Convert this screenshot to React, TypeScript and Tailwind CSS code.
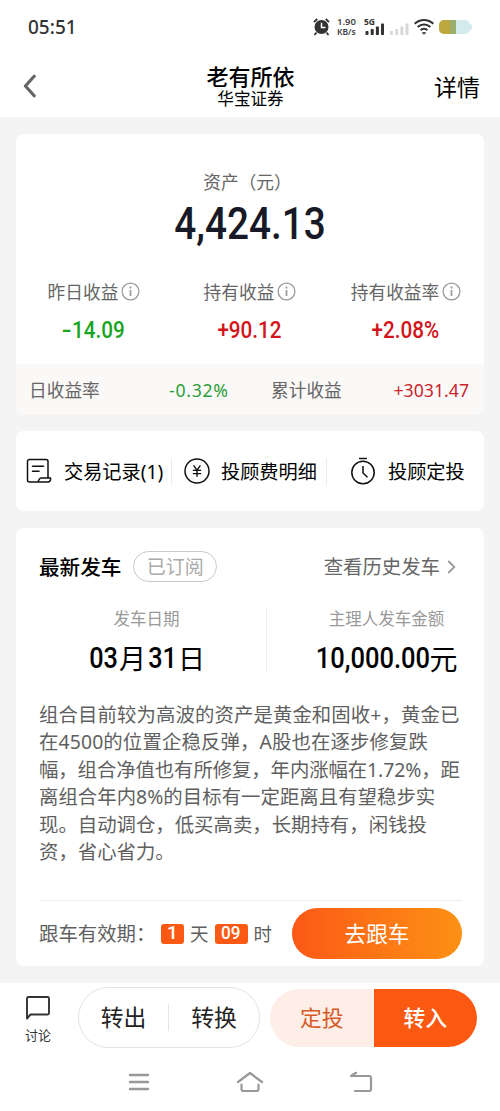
import React from "react";

const cjk = "font-['Noto_Sans','Noto_Sans_CJK_SC',sans-serif]";

function Info() {
  return (
    <svg className="ml-[3px] h-[19px] w-[19px] shrink-0" viewBox="0 0 19 19" fill="none" stroke="#999">
      <circle cx="9.5" cy="9.5" r="8.4" strokeWidth="1.3" />
      <path d="M9.5 8v6" strokeWidth="1.7" />
      <path d="M9.5 4.6v1.9" strokeWidth="1.8" />
    </svg>
  );
}

function Stat({ label, value, sign, color }: { label: string; value: string; sign: string; color: string }) {
  return (
    <div className="flex flex-1 flex-col items-center">
      <div className="flex h-[26px] items-center text-[17.7px] text-[#666]">
        <span className="pt-[2px]">{label}</span>
        <Info />
      </div>
      <div className={`mt-[11px] flex h-[30px] items-center pt-[2px] pr-[1px] font-['Roboto',sans-serif] text-[23.5px] font-medium ${color}`}>
        <span className="scale-x-[.88]">
          {sign === "-" ? <span className="mr-[2px] inline-block scale-x-[1.400]">-</span> : sign}
          {value}
        </span>
      </div>
    </div>
  );
}

function StatusBar() {
  return (
    <div className="flex h-[54px] shrink-0 items-center pl-[28px] pr-[28px]">
      <span className="text-[19px] font-medium leading-[54px] text-[#333]">05:51</span>
      <svg className="ml-auto h-[18px] w-[17px]" viewBox="0 0 17 18" fill="none">
        <circle cx="8.5" cy="9" r="7" fill="#333" />
        <path d="M8.5 4.8v4.7h4" stroke="#fff" strokeWidth="1.5" />
        <path d="M1 4.2 4.2 1M16 4.2 12.8 1M3.5 14.5 1.5 17M13.5 14.5l2 2.5" stroke="#333" strokeWidth="1.8" />
      </svg>
      <div className="ml-[7px] flex w-[21px] flex-col text-[9.5px] font-semibold leading-[10px] text-[#444]">
        <span className="whitespace-nowrap">1.90</span>
        <span className="whitespace-nowrap text-[8.5px]">KB/s</span>
      </div>
      <svg className="ml-[6px] h-[20px] w-[21px]" viewBox="0 0 21 20" fill="#333">
        <text x="0" y="7.5" fontSize="8.5" fontWeight="700" fontFamily="Noto Sans">5G</text>
        <rect x="1.5" y="14" width="3" height="4" rx=".7" />
        <rect x="6.7" y="12" width="3" height="6" rx=".7" />
        <rect x="11.9" y="9.5" width="3" height="8.5" rx=".7" />
        <rect x="17" y="6.5" width="3" height="11.5" rx=".7" />
      </svg>
      <svg className="ml-[4px] h-[20px] w-[21px]" viewBox="0 0 21 20" fill="#d8d8d8">
        <rect x="1" y="14" width="3" height="4" rx=".7" />
        <rect x="6.2" y="12" width="3" height="6" rx=".7" />
        <rect x="11.4" y="9.5" width="3" height="8.5" rx=".7" />
        <rect x="16.5" y="6.5" width="3" height="11.5" rx=".7" />
      </svg>
      <svg className="ml-[4px] h-[18px] w-[20px]" viewBox="0 0 20 18" fill="none" stroke="#333" strokeWidth="2">
        <path d="M.7 5.7a13.3 13.3 0 0 1 18.6 0M3.7 9a9 9 0 0 1 12.6 0M6.6 12.2a5 5 0 0 1 6.8 0" />
        <path d="M7.6 14.2h4.8L10 16.8z" fill="#333" stroke="none" />
      </svg>
      <div className="ml-[5px] flex h-[14px] w-[31px] overflow-hidden rounded-[5px] bg-[#d3ebec]">
        <div className="w-[11px] bg-[#bfa73f]" />
        <div className="w-[6px] bg-[#9aaf6c]" />
      </div>
      <div className="h-[6px] w-[2px] rounded-r-full bg-[#d3ebec]" />
    </div>
  );
}

const lines = [
  { text: "组合目前较为高波的资产是黄金和固收+，黄金已", spacing: "tracking-[.1px]" },
  { text: "在4500的位置企稳反弹，A股也在逐步修复跌", spacing: "tracking-[.12px]" },
  { text: "幅，组合净值也有所修复，年内涨幅在1.72%，距", spacing: "tracking-[-.09px]" },
  { text: "离组合年内8%的目标有一定距离且有望稳步实", spacing: "tracking-[.03px]" },
  { text: "现。自动调仓，低买高卖，长期持有，闲钱投", spacing: "tracking-normal" },
  { text: "资，省心省力。", spacing: "tracking-normal" },
];

export default function App() {
  return (
    <div className={`flex h-[1111px] w-[500px] flex-col overflow-hidden whitespace-nowrap bg-[#f4f4f4] text-black ${cjk}`}>
      <header className="h-[117px] shrink-0 bg-white">
        <StatusBar />
        <div className="grid h-[63px] grid-cols-3 items-center pl-[23px] pr-[20px]">
          <svg className="h-[24px] w-[14px]" viewBox="0 0 14 24" fill="none" stroke="#666" strokeWidth="3.2" strokeLinecap="round" strokeLinejoin="round">
            <path d="M11.2 2.2 2.4 12l8.8 9.8" />
          </svg>
          <div className="flex flex-col items-center pr-[2px] pt-[4px] font-['Liberation_Sans','Noto_Sans_CJK_SC',sans-serif]">
            <span className="text-[22px] font-medium leading-[25px]">老有所依</span>
            <span className="text-[16.6px] leading-[20px]">华宝证券</span>
          </div>
          <span className="pt-[2px] text-right text-[23px] leading-[30px]">详情</span>
        </div>
      </header>

      <section className="mx-[16px] mt-[17px] flex h-[281px] shrink-0 flex-col overflow-hidden rounded-[8px] bg-white">
        <div className="mt-[35px] h-[25px] pr-[5px] text-center text-[17.7px] leading-[26px] text-[#666]">资产（元）</div>
        <div className="flex h-[58px] items-center justify-center pt-[2px]">
          <span className="scale-x-[.88] font-['Roboto',sans-serif] text-[44px] font-medium text-[#171a26]">4,424.13</span>
        </div>
        <div className="mt-[26px] flex">
          <Stat label="昨日收益" sign="-" value="14.09" color="text-[#1aa51f]" />
          <Stat label="持有收益" sign="+" value="90.12" color="text-[#d3141b]" />
          <Stat label="持有收益率" sign="+" value="2.08%" color="text-[#d3141b]" />
        </div>
        <div className="mt-auto flex h-[51px] items-center bg-[#fbf9f8] pl-[13px] pr-[15px] pt-[2px] text-[17.7px] text-[#666]">
          <span className="w-[140px]">日收益率</span>
          <span className="w-[102px] tracking-[.7px] text-[#2f9e36]">-0.32%</span>
          <span>累计收益</span>
          <span className="ml-auto text-[#c8262c]">+3031.47</span>
        </div>
      </section>

      <section className="mx-[16px] mt-[16px] flex h-[80px] shrink-0 items-center rounded-[8px] bg-white text-[19.2px]">
        <div className="flex w-[155px] items-center pl-[10px]">
          <svg className="h-[26px] w-[26px]" viewBox="0 0 26 26" fill="none" stroke="#111" strokeWidth="1.5" strokeLinejoin="round" strokeLinecap="round">
            <path d="M22 19.500V3.5a2 2 0 0 0-2-2H3.5a2 2 0 0 0-2 2V22a2 2 0 0 0 2 2h7.500c2.200 0 1.200-4 4-4H24.5c.5 2-.6 4-2.5 4H11M6.5 8.2h11M6.5 13.2H13" />
          </svg>
          <span className="ml-[12px] pt-[2px]">交易记录(1)</span>
        </div>
        <div className="flex h-[27px] w-[155px] items-center border-l border-[#ececec] pl-[12px]">
          <svg className="h-[26px] w-[26px]" viewBox="0 0 26 26" fill="none" stroke="#111" strokeWidth="1.5">
            <circle cx="13" cy="13" r="12" />
            <path d="m9.6 7.4 3.4 4.800 3.4-4.800M13 12.2v6.600M8.8 12.4h8.400M8.8 15.6h8.400" strokeWidth="1.4" />
          </svg>
          <span className="ml-[11px] pt-[2px]">投顾费明细</span>
        </div>
        <div className="flex h-[27px] flex-1 items-center border-l border-[#ececec] pl-[23px]">
          <svg className="h-[28px] w-[26px]" viewBox="0 0 26 28" fill="none" stroke="#111" strokeWidth="1.5">
            <circle cx="13" cy="15.5" r="11.2" />
            <path d="M9 1.6h8M13 9v7l4.5 4.2" />
          </svg>
          <span className="ml-[12px] pt-[2px]">投顾定投</span>
        </div>
      </section>

      <section className="mx-[16px] mt-[17px] flex h-[438px] shrink-0 flex-col rounded-[8px] bg-white pl-[23px] pr-[22px]">
        <div className="mt-[23px] flex h-[31px] items-center">
          <span className="pt-[2px] text-[20.6px] font-medium">最新发车</span>
          <span className="ml-[12px] flex h-[31px] w-[84px] items-center justify-center rounded-full border border-[#c9c9c9] pt-[2px] text-[19px] text-[#aaa]">已订阅</span>
          <span className="ml-auto pt-[1px] text-[19.4px] text-[#666]">查看历史发车</span>
          <svg className="ml-[7px] mr-[6px] h-[14px] w-[9px]" viewBox="0 0 9 14" fill="none" stroke="#999" strokeWidth="1.8">
            <path d="m1.3 1 6 6-6 6" />
          </svg>
        </div>
        <div className="mt-[26px] flex h-[64px]">
          <div className="flex w-[228px] flex-col items-center border-r border-[#eee] pr-[12px]">
            <span className="text-[16.5px] leading-[21px] text-[#999]">发车日期</span>
            <span className="mt-[12px] flex h-[36px] items-center text-[27px]">
              <b className="-mx-[1px] scale-x-[.87] font-['Roboto',sans-serif] text-[29px] font-medium">03</b>月
              <b className="-mx-[.5px] scale-x-[.87] font-['Roboto',sans-serif] text-[29px] font-medium">31</b>日
            </span>
          </div>
          <div className="flex flex-1 flex-col items-center pl-[44px]">
            <span className="text-[16.5px] leading-[21px] text-[#999]">主理人发车金额</span>
            <span className="mt-[12px] flex h-[36px] items-center text-[28px]">
              <b className="-mx-[8px] scale-x-[.88] font-['Roboto',sans-serif] text-[29px] font-medium">10,000.00</b>元
            </span>
          </div>
        </div>
        <div className="mt-[29px] text-[19.4px] leading-[27.4px] text-[#5f5f5f]">
          {lines.map((l) => (
            <div key={l.text} className={l.spacing}>{l.text}</div>
          ))}
        </div>
        <div className="mt-auto flex h-[66px] items-center border-t border-[#eee] text-[19.4px] text-[#5f5f5f]">
          <span className="w-[122px] pt-[1px]">跟车有效期：</span>
          <span className="flex h-[20px] w-[23px] items-center justify-center rounded-[3px] bg-[#fa5914] font-['Roboto',sans-serif] text-[19px] font-medium text-white">1</span>
          <span className="ml-[6px] pt-[1px] text-[18.5px]">天</span>
          <span className="ml-[6px] flex h-[20px] w-[33px] items-center justify-center rounded-[3px] bg-[#fa5914] font-['Roboto',sans-serif] text-[19px] font-medium text-white">
            <span className="scale-x-[.9]">09</span>
          </span>
          <span className="ml-[6px] pt-[1px] text-[18.5px]">时</span>
          <button className="ml-auto h-[51px] w-[170px] rounded-full bg-gradient-to-r from-[#fb5716] to-[#fc9014] pt-[2px] text-[21.6px] text-white">去跟车</button>
        </div>
      </section>

      <footer className="mt-auto h-[128px] shrink-0 bg-white">
        <div className="flex h-[69px] items-center pl-[24px] pr-[23px]">
          <div className="flex w-[28px] flex-col items-center pt-[4px]">
            <svg className="h-[26px] w-[26px]" viewBox="0 0 26 26" fill="none" stroke="#333" strokeWidth="1.9" strokeLinejoin="round">
              <path d="M2 23.500V3.5A1.5 1.5 0 0 1 3.500 2h19A1.500 1.500 0 0 1 24 3.500v14.500a1.500 1.500 0 0 1-1.500 1.500H5.500z" />
            </svg>
            <span className="mt-[4px] text-[13px] leading-[20px] text-[#333]">讨论</span>
          </div>
          <div className="ml-[26px] flex h-[61px] w-[182px] items-center rounded-full border border-[#e2e2e2] text-[22.800px] text-[#222]">
            <span className="w-[89px] pt-[1px] text-center">转出</span>
            <span className="h-[27px] w-px bg-[#e5e5e5]" />
            <span className="flex-1 pt-[1px] text-center">转换</span>
          </div>
          <div className="ml-[10px] flex h-[58px] w-[207px] overflow-hidden rounded-full text-[21.800px]">
            <span className="flex flex-1 items-center justify-center bg-[#feeee8] pt-[2px] text-[#d65a25]">定投</span>
            <span className="flex flex-1 items-center justify-center bg-[#fb5912] pt-[2px] font-medium text-white">转入</span>
          </div>
        </div>
        <div className="flex h-[59px] items-center justify-center gap-[86px] pt-[1px]">
          <svg className="h-[22px] w-[24px]" viewBox="0 0 24 22" stroke="#999" strokeWidth="2.400" strokeLinecap="round">
            <path d="M4 4h18M4 11h18M4 18h18" />
          </svg>
          <svg className="h-[22px] w-[28px]" viewBox="0 0 28 22" fill="none" stroke="#999" strokeWidth="2.200" strokeLinecap="round" strokeLinejoin="round">
            <path d="M2 11 14 2l12 9M5.500 13.500V18a2 2 0 0 0 2 2h13a2 2 0 0 0 2-2v-4.500" />
          </svg>
          <svg className="h-[22px] w-[24px]" viewBox="0 0 24 22" fill="none" stroke="#999" strokeWidth="2.200" strokeLinecap="round" strokeLinejoin="round">
            <path d="M6 1.800 1 5h18a2 2 0 0 1 2 2V18a2 2 0 0 1-2 2H5" />
          </svg>
        </div>
      </footer>
    </div>
  );
}
